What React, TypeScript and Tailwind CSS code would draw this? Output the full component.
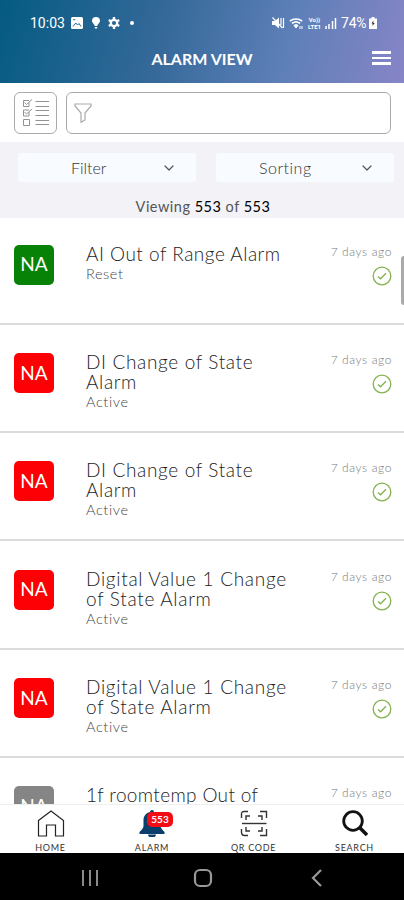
import React from 'react';
import { ChevronDown } from 'lucide-react';

interface Alarm {
  title: string[];
  status: string;
  color: string;
  age: string;
  tracking: string;
}

const alarms: Alarm[] = [
  {
    title: ['AI Out of Range Alarm'],
    status: 'Reset',
    color: 'bg-[#078207]',
    age: '7 days ago',
    tracking: 'tracking-[0.5px]',
  },
  {
    title: ['DI Change of State', 'Alarm'],
    status: 'Active',
    color: 'bg-[#fd0006]',
    age: '7 days ago',
    tracking: 'tracking-[0.65px]',
  },
  {
    title: ['DI Change of State', 'Alarm'],
    status: 'Active',
    color: 'bg-[#fd0006]',
    age: '7 days ago',
    tracking: 'tracking-[0.65px]',
  },
  {
    title: ['Digital Value 1 Change', 'of State Alarm'],
    status: 'Active',
    color: 'bg-[#fd0006]',
    age: '7 days ago',
    tracking: 'tracking-[0.7px]',
  },
  {
    title: ['Digital Value 1 Change', 'of State Alarm'],
    status: 'Active',
    color: 'bg-[#fd0006]',
    age: '7 days ago',
    tracking: 'tracking-[0.7px]',
  },
  {
    title: ['1f roomtemp Out of'],
    status: 'Active',
    color: 'bg-[#858585]',
    age: '7 days ago',
    tracking: 'tracking-[0.35px]',
  },
];

const StatusBar: React.FC = () => (
  <div className="flex h-[46px] items-center justify-between pl-[30px] pr-[27px] font-['Roboto',sans-serif] text-[14px] text-white">
    <div className="flex items-center">
      <span className="w-[41px]">10:03</span>
      <svg className="h-3 w-3" viewBox="0 0 12 12" fill="none">
        <rect width="12" height="12" rx="1.5" fill="white" />
        <path d="M2 9.5 4.8 6l1.8 2L8 6.5l2 3M2.2 2.7h2" stroke="#28658f" />
      </svg>
      <svg className="ml-2 h-3.5 w-2.5" viewBox="0 0 10 14" fill="white">
        <path d="M5 1a4 4 0 0 0-4 4c0 2 2.5 3.2 2.8 5h2.4C6.5 8.2 9 7 9 5a4 4 0 0 0-4-4ZM3.8 11h2.4v1.5H3.8z" />
      </svg>
      <svg className="ml-[7px] h-3 w-3" viewBox="0 0 12 12" fill="none" stroke="white">
        <circle cx="6" cy="6" r="3.2" strokeWidth="2.3" />
        <path
          d="M6 0v2M6 10v2M.8 3l1.7 1M9.5 8l1.7 1M.8 9l1.7-1M9.5 4l1.7-1"
          strokeWidth="2.4"
        />
      </svg>
      <span className="ml-[10px] h-1 w-1 rounded-full bg-white" />
    </div>
    <div className="flex items-center">
      <svg className="h-3 w-[13px]" viewBox="0 0 13 12">
        <path d="M0 4h3l4-3.5v11L3 8H0z" fill="white" />
        <path d="m.5.5 10 10.5M9 1v7M11.5 1v10" stroke="white" fill="none" strokeWidth="1.2" />
      </svg>
      <svg className="ml-1 h-[13px] w-[15px]" viewBox="0 0 15 13" fill="none" stroke="white">
        <path d="M.8 4.2a10 10 0 0 1 12.4 0M3 6.5a6.5 6.5 0 0 1 8 0" strokeWidth="1.6" />
        <path d="M5 8.3a3.5 3.5 0 0 1 4 0L7 11z" fill="white" />
        <path d="M11 9v3M13 9v3" />
      </svg>
      <div className="ml-[3px] flex w-[15px] flex-col items-center text-[6px] font-bold leading-[7px]">
        <span>Vo))</span>
        <span>LTE1</span>
      </div>
      <svg className="ml-[3px] h-3 w-3" viewBox="0 0 12 12" stroke="white" strokeWidth="1.5">
        <path d="M1 12V9M4 12V7M7.5 12V4M10.5 12V1" />
      </svg>
      <span className="ml-1 w-[28px] tracking-[-0.2px]">74%</span>
      <svg className="h-3 w-2" viewBox="0 0 8 12">
        <path d="M2.5 0h3v1.5H8V12H0V1.5h2.5z" fill="white" />
        <path d="M4.5 3.5 2.5 6.5h1.3L3.5 9 5.7 6H4.3z" fill="#24242c" />
      </svg>
    </div>
  </div>
);

const ChecklistIcon: React.FC = () => (
  <svg className="h-7 w-7" viewBox="0 0 28 28" fill="none" stroke="#929292">
    <path d="M7 3.5v4H1.5v-6H7M7 13v4H1.5v-6H7M1.5 20.5h6v6h-6z" />
    <path d="m2.5 3.5 2 2L10 .5M2.5 13l2 2L10 10" />
    <path d="M13.5 2.5H27M13.5 7.5H27M13.5 11.5H27M13.5 16.5H27M13.5 21.5H27M13.5 25.5H27" />
  </svg>
);

const SelectBox: React.FC<{ label: string; className: string }> = ({
  label,
  className,
}) => (
  <button
    className={`flex h-[29px] w-[178px] items-center justify-between rounded-[3px] bg-[#f8fbff] pr-[19px] text-[16px] font-light text-[#333] ${className}`}
  >
    <span>{label}</span>
    <ChevronDown size={16} strokeWidth={1.8} className="text-[#555]" />
  </button>
);

const AlarmRow: React.FC<{ alarm: Alarm; first: boolean }> = ({
  alarm,
  first,
}) => (
  <li
    className={`flex shrink-0 border-b-2 border-[#dcdcdc] pl-[14px] pr-[12px] ${
      first ? 'h-[106.7px] pt-[26.7px]' : 'h-[108.3px] pt-[28.3px]'
    }`}
  >
    <div
      className={`flex h-10 w-10 shrink-0 items-center justify-center rounded-[5px] text-[19px] text-white ${alarm.color}`}
    >
      NA
    </div>
    <div className="ml-[32px] flex-1 whitespace-nowrap">
      <h2
        className={`-mt-px text-[19px] font-light leading-5 text-[#222] ${alarm.tracking}`}
      >
        {alarm.title.map((line) => (
          <span key={line} className="block">
            {line}
          </span>
        ))}
      </h2>
      <p className="text-[14.5px] font-light leading-5 tracking-[0.6px] text-[#444]">
        {alarm.status}
      </p>
    </div>
    <div className="flex flex-col items-end">
      <span className="text-[12px] font-light leading-[14px] tracking-[0.6px] text-[#777]">
        {alarm.age}
      </span>
      <svg className="mt-[7px] h-5 w-5" viewBox="0 0 20 20" fill="none" stroke="#83b34f">
        <circle cx="10" cy="10" r="8.8" strokeWidth="1.3" />
        <path d="m6 10.5 2.5 2.3L14 7.3" strokeWidth="1.4" />
      </svg>
    </div>
  </li>
);

const tabClass = 'flex w-[101px] flex-col items-center pt-[5px]';
const tabLabel = 'mt-[5px] text-[9px] leading-[11px] tracking-[0.7px] text-[#333]';

const TabBar: React.FC = () => (
  <nav className="flex h-[49px] shrink-0 border-t border-[#eee] bg-white">
    <div className={tabClass}>
      <svg className="h-[27px] w-7" viewBox="0 0 28 27" fill="none" stroke="#222" strokeWidth="1.2">
        <path d="M1.5 10.5 14 1l12.5 9.5V26h-8V15h-9v11h-8z" />
      </svg>
      <span className={tabLabel}>HOME</span>
    </div>
    <div className={`${tabClass} pl-px`}>
      <div className="relative">
        <svg className="h-[27px] w-7" viewBox="0 0 28 27" fill="#0b3f6b">
          <path d="M14 0a2 2 0 0 0-2 2C8 3 5.5 6 5.5 10v6c0 2-2 4-4 6v2h25v-2c-2-2-4-4-4-6v-6c0-4-2.5-7-6.5-8a2 2 0 0 0-2-2ZM10 24.500a4 3 0 0 0 8 0z" />
        </svg>
        <span className="absolute left-[9px] top-[2px] flex h-[15px] w-[26px] items-center justify-center rounded-[5px] bg-[#f20d16] text-[10px] font-bold text-white">
          553
        </span>
      </div>
      <span className={tabLabel}>ALARM</span>
    </div>
    <div className={`${tabClass} pl-0.5`}>
      <svg className="h-[27px] w-7" viewBox="0 0 28 27" fill="none" stroke="#333" strokeWidth="1.4">
        <path d="M1.5 8V4q0-2.5 2.5-2.5h4M20 1.5h6.5V8M1.5 19v3q0 3.5 3 3.5H8M20 25.5h6.5V19" />
        <path d="M6 10V6h4M18 6h4v4M6 17v4h4M18 21h4v-4" />
        <path d="M2 13.5h24.5" />
      </svg>
      <span className={tabLabel}>QR CODE</span>
    </div>
    <div className={`${tabClass} pl-0.5`}>
      <svg className="h-[27px] w-7" viewBox="0 0 28 27" fill="none" stroke="#111">
        <circle cx="12" cy="11" r="9.3" strokeWidth="2.8" />
        <path d="m18.5 17.5 7.5 7.5" strokeWidth="3.5" />
      </svg>
      <span className={tabLabel}>SEARCH</span>
    </div>
  </nav>
);

const App: React.FC = () => {
  return (
    <div className="flex h-[900px] w-[404px] flex-col overflow-hidden bg-white font-['Lato',sans-serif]">
      <header className="h-[83px] shrink-0 bg-[linear-gradient(105deg,#045b82_0%,#35699a_40%,#5d7fb7_70%,#8785c7_100%)]">
        <StatusBar />
        <div className="relative flex h-[25px] items-center justify-center">
          <h1 className="text-[16px] font-bold text-white">ALARM VIEW</h1>
          <button className="absolute right-[13px] top-[5px] flex w-[19px] flex-col gap-[3px]">
            <span className="h-[2.5px] bg-white" />
            <span className="h-[2.5px] bg-white" />
            <span className="h-[2.5px] bg-white" />
          </button>
        </div>
      </header>

      {/* Search */}
      <div className="flex h-[59px] shrink-0 gap-[9px] pl-[14px] pr-[13px] pt-[9px]">
        <button className="flex h-[42px] w-[43px] items-center justify-center rounded-[6px] border border-[#aaa]">
          <ChecklistIcon />
        </button>
        <div className="flex h-[42px] flex-1 items-center rounded-[6px] border border-[#aaa] pl-[7px]">
          <svg className="h-5 w-[18px]" viewBox="0 0 18 20" fill="none" stroke="#aaa" strokeWidth="1.2">
            <path d="M1 1h16v2l-6 7v7l-4 2.3V10L1 3z" />
          </svg>
        </div>
      </div>

      {/* Filter and sorting */}
      <section className="h-[76px] shrink-0 bg-[#f2f2f7] pt-[11px]">
        <div className="flex justify-between pl-[18px] pr-[10px]">
          <SelectBox label="Filter" className="pl-[53px]" />
          <SelectBox label="Sorting" className="pl-[43px] tracking-[0.5px]" />
        </div>
        <p className="mt-[13.5px] pl-0.5 text-center text-[14.5px] leading-[22px] tracking-[0.5px] text-[#555]">
          Viewing <span className="text-black">553</span> of{' '}
          <span className="text-black">553</span>
        </p>
      </section>

      <main className="relative min-h-0 flex-1 overflow-hidden">
        <ul className="flex flex-col">
          {alarms.map((alarm, index) => (
            <AlarmRow key={index} alarm={alarm} first={index === 0} />
          ))}
        </ul>
        <div className="absolute right-0 top-[38px] h-[49px] w-[3px] rounded-l bg-[#aaa]" />
      </main>

      <TabBar />

      {/* Android navigation */}
      <footer className="flex h-[47px] shrink-0 items-center bg-black pt-0.5">
        <svg className="ml-[81px] h-[18px] w-[18px]" viewBox="0 0 18 18" stroke="#8a8a8a" strokeWidth="2">
          <path d="M2 1v16M9 1v16M16 1v16" />
        </svg>
        <svg className="ml-[94px] h-5 w-5" viewBox="0 0 20 20" fill="none" stroke="#999" strokeWidth="2.2">
          <rect x="2" y="2" width="16" height="16" rx="5" />
        </svg>
        <svg className="ml-[98px] h-[18px] w-3" viewBox="0 0 12 18" fill="none" stroke="#999" strokeWidth="2.2">
          <path d="m10 1-8 8 8 8" />
        </svg>
      </footer>
    </div>
  );
};

export default App;
